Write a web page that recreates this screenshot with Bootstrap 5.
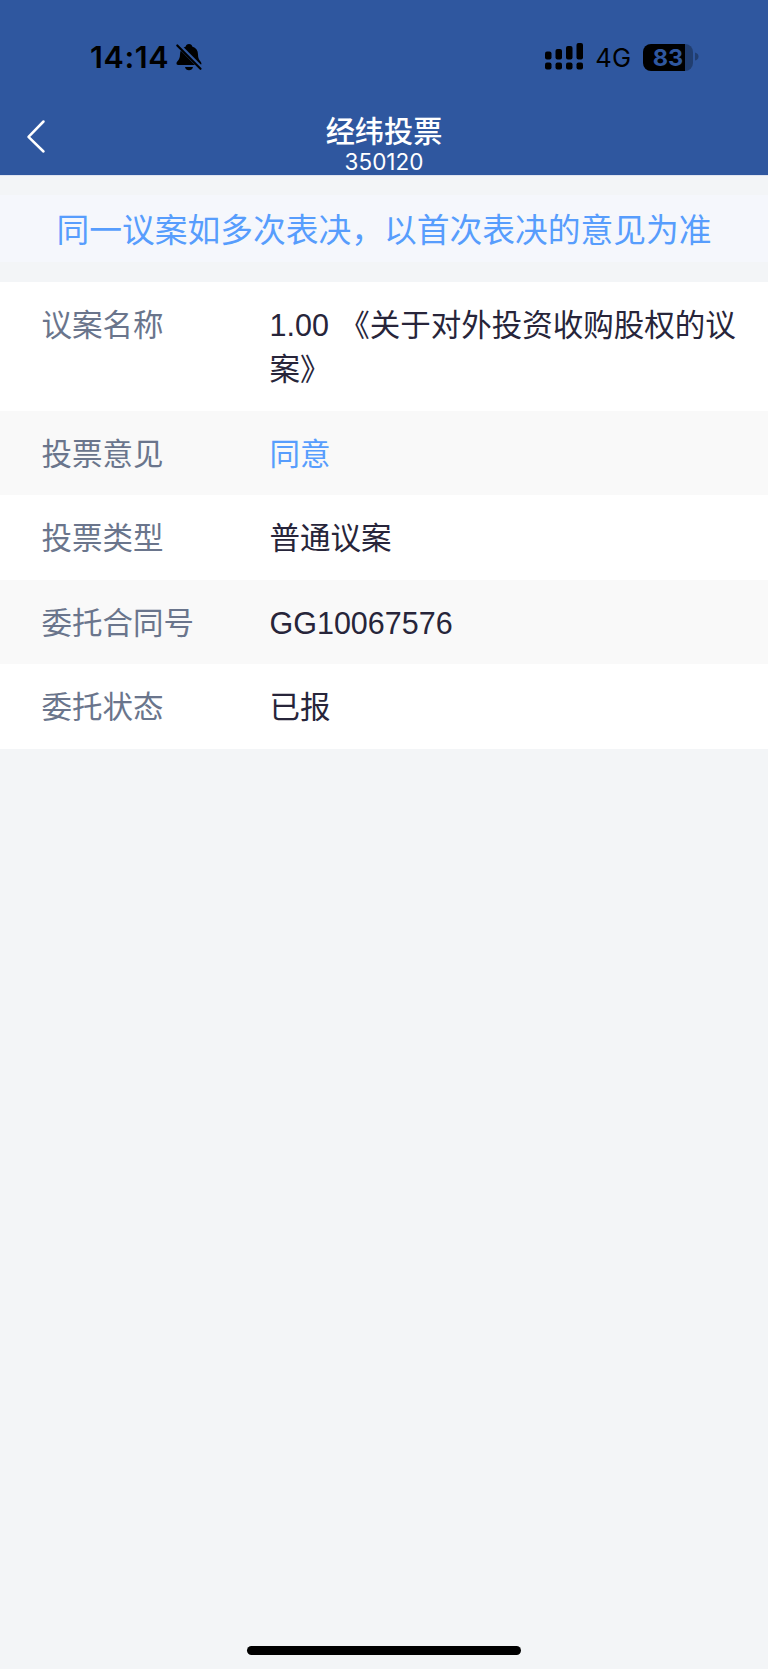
<!DOCTYPE html>
<html lang="zh-CN">
<head>
<meta charset="utf-8">
<meta name="viewport" content="width=device-width, initial-scale=1">
<title>经纬投票</title>
<link href="https://cdn.jsdelivr.net/npm/bootstrap@5.3.0/dist/css/bootstrap.min.css" rel="stylesheet">
<style>
body{background:#f3f5f7;font-family:"Liberation Sans","Noto Sans CJK SC",sans-serif;color:#27253a}
.app-head{background:#2f579f;height:175px;color:#fff;flex:none;box-shadow:0 1px 0 #dfe4f0}
.status-row{height:106px;padding:8px 69px 0 90px;color:#000;font-family:Inter,sans-serif}
.clock{font-size:30.5px;font-weight:600;line-height:36px;letter-spacing:.6px}
.bell{margin-left:5.5px}
.net{font-size:25.6px;line-height:36px;margin:2px 12px 0 12px}
.charge{width:50px;height:27px;border-radius:8px;background:linear-gradient(90deg,#000 42px,#213e70 42px);color:#2f579f;font-size:23.5px;font-weight:700;line-height:27px}
.title-row{height:69px;display:grid;grid-template-columns:80px 1fr 80px}
.page-title{font-size:29.2px;font-weight:500;line-height:32px;margin-top:10px}
.code{font-family:Inter,sans-serif;font-size:22.5px;line-height:24px;margin-top:2px}
.notice{margin-top:20px;height:67px;background:#f5f7fc;color:#579dfd;font-size:32.75px;line-height:66px;padding-top:2.5px;white-space:nowrap}
.details{margin-top:20px}
.detail{padding:21.25px 28px 19.25px 41.5px;font-size:30.5px;line-height:44px;background:#fff}
.detail:nth-child(even){background:#f9f9f9}
.detail dt{width:228px;flex:none;color:#6a758c}
.detail dd{word-spacing:2px}
.agree{color:#579dfd}
.home-bar{width:274px;height:9px;margin-bottom:14.5px;background:#000}
</style>
</head>
<body>
<div class="d-flex flex-column min-vh-100">
  <header class="app-head">
    <div class="status-row d-flex align-items-center justify-content-between">
      <div class="d-flex align-items-center">
        <span class="clock">14:14</span>
        <svg class="bell" width="28" height="30" viewBox="0 0 28 30">
          <path d="M14 2C12 2 11 3.2 10.8 4.6C6.8 6 5 8.7 5 12.5C5 18.3 1.7 19.2 1.5 21.3C1.4 22.4 2 23 3.2 23H24.8C26 23 26.6 22.4 26.4 21.3C26 19.2 23 18.3 23 12.5C23 8.7 21.2 6 17.2 4.6C17 3.2 16 2 14 2Z M10 25H18C17.5 27.3 16 28.3 14 28.3S10.500 27.3 10 25Z"/>
          <path d="M2.800 2.500L26.500 26.500" stroke="#2f579f" stroke-width="4.500"/>
          <path d="M2.300 3.500L25.500 26.800" stroke="#000" stroke-width="2.200" stroke-linecap="round"/>
        </svg>
      </div>
      <div class="d-flex align-items-center">
        <svg width="38" height="28" viewBox="0 0 38 28">
          <rect y="8.500" width="6.500" height="8" rx="2"/><rect x="10.500" y="6" width="6.500" height="10.500" rx="2"/><rect x="21" y="3" width="6.500" height="13.500" rx="2"/><rect x="31.500" width="6.500" height="16.500" rx="2"/>
          <rect y="19.500" width="6.500" height="7" rx="2"/><rect x="10.500" y="19.500" width="6.500" height="7" rx="2"/><rect x="21" y="19.500" width="6.500" height="7" rx="2"/><rect x="31.500" y="19.500" width="6.500" height="7" rx="2"/>
        </svg>
        <span class="net">4G</span>
        <div class="charge text-center">83</div>
        <svg width="6" height="28" viewBox="0 0 6 28"><path d="M2 9.500Q5.500 10.500 5.500 13.500T2 17.500Z" fill="#213e70"/></svg>
      </div>
    </div>
    <div class="title-row">
      <svg width="50" height="60" viewBox="0 0 50 60" fill="none" stroke="#fff" stroke-width="2.500" stroke-linecap="round" stroke-linejoin="round"><path d="M43.500 15.500L28.500 30.800L43.500 45.500"/></svg>
      <div class="text-center"><h1 class="page-title mb-0">经纬投票</h1><div class="code">350120</div></div>
    </div>
  </header>
  <main class="flex-grow-1">
    <div class="notice text-center">同一议案如多次表决，以首次表决的意见为准</div>
    <dl class="details mb-0">
      <div class="detail d-flex"><dt class="fw-normal">议案名称</dt><dd class="mb-0">1.00 《关于对外投资收购股权的议案》</dd></div>
      <div class="detail d-flex"><dt class="fw-normal">投票意见</dt><dd class="mb-0 agree">同意</dd></div>
      <div class="detail d-flex"><dt class="fw-normal">投票类型</dt><dd class="mb-0">普通议案</dd></div>
      <div class="detail d-flex"><dt class="fw-normal">委托合同号</dt><dd class="mb-0">GG10067576</dd></div>
      <div class="detail d-flex"><dt class="fw-normal">委托状态</dt><dd class="mb-0">已报</dd></div>
    </dl>
  </main>
  <div class="home-bar rounded-pill mx-auto"></div>
</div>
<script src="https://cdn.jsdelivr.net/npm/bootstrap@5.3.0/dist/js/bootstrap.bundle.min.js"></script>
</body>
</html>
